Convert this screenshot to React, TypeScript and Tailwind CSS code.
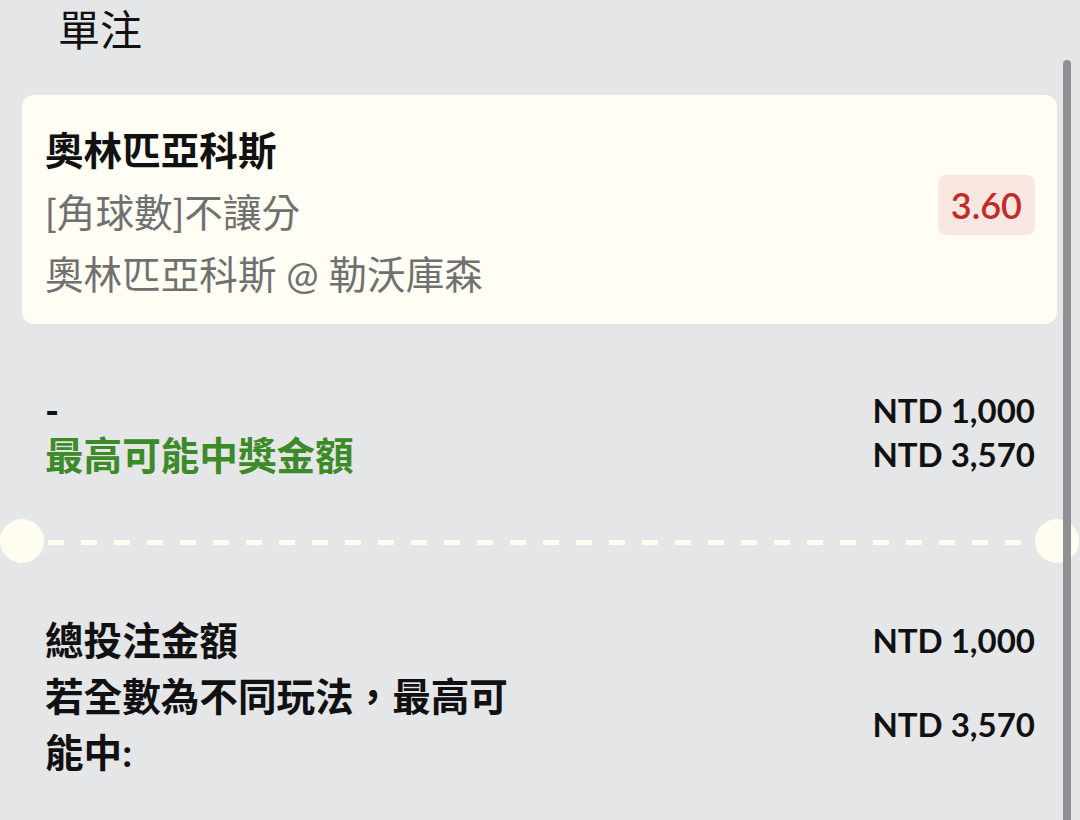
import React from "react";

const FONT = "font-['Lato','Noto_Sans_CJK_TC',sans-serif]";

type Row = { label: React.ReactNode; value: string };

function SummaryRow({ label, value }: Row) {
    return (
        <div className="flex flex-row items-center justify-between">
            {label}
            <div className="text-[33px] font-bold leading-[56px] text-[#111]">{value}</div>
        </div>
    );
}

export default function App() {
    return (
        <main className={`relative w-[1080px] h-[820px] overflow-hidden bg-[#e5e6e8] ${FONT}`}>
            {/* header */}
            <div className="h-[60px] pl-[58px] text-[42px] leading-[60px] text-[#111]">單注</div>

            {/* selection card */}
            <div className="mt-[35px] ml-[22px] mr-[23px] h-[229px] rounded-[12px] bg-[#fffdf4] pt-[24px] pl-[23px] pr-[22px] flex flex-row items-start justify-between">
                <div className="flex flex-col text-[38.6px] leading-[62px]">
                    <div className="font-bold text-[#111]">奧林匹亞科斯</div>
                    <div className="text-[#707070]">[角球數]不讓分</div>
                    <div className="text-[#707070]">奧林匹亞科斯 @ 勒沃庫森</div>
                </div>
                <div className="mt-[56px] h-[60px] px-[13px] rounded-[8px] bg-[#f8e7e0] flex items-center text-[36px] font-semibold text-[#c32a2a]">
                    3.60
                </div>
            </div>

            {/* stake + potential win */}
            <div className="mt-[64px] px-[45px] flex flex-col">
                <div className="h-[44px] flex flex-row items-center justify-between">
                    <div className="text-[38px] font-bold text-[#111] leading-[44px]">-</div>
                    <div className="text-[33px] font-bold text-[#111] leading-[44px]">NTD 1,000</div>
                </div>
                <div className="h-[44px] flex flex-row items-center justify-between">
                    <div className="text-[38.6px] font-bold text-[#3d8a28] leading-[44px] mt-[2px]">最高可能中獎金額</div>
                    <div className="text-[33px] font-bold text-[#111] leading-[44px]">NTD 3,570</div>
                </div>
            </div>

            {/* ticket divider */}
            <div className="mt-[43px] h-[44px] pr-[1px] flex flex-row items-center">
                <div className="w-[44px] h-[44px] rounded-full bg-[#fffdf0] shrink-0" />
                <div className="flex-1 mx-[4px] mt-[3px] h-[5px] bg-[repeating-linear-gradient(90deg,#fffdf0_0_16px,transparent_16px_33px)]" />
                <div className="w-[44px] h-[44px] rounded-full bg-[#fffdf0] shrink-0" />
            </div>

            {/* totals */}
            <div className="mt-[49px] px-[45px] flex flex-col">
                <SummaryRow
                    label={<div className="text-[38.6px] font-bold leading-[56px] text-[#111]">總投注金額</div>}
                    value="NTD 1,000"
                />
                <SummaryRow
                    label={
                        <div className="w-[480px] text-[38.6px] font-bold leading-[56px] text-[#111]">
                            若全數為不同玩法，最高可能中:
                        </div>
                    }
                    value="NTD 3,570"
                />
            </div>

            {/* scrollbar */}
            <div className="absolute left-[1063px] top-[60px] w-[8px] h-[800px] rounded-full bg-[#8f8f94]" />
        </main>
    );
}
